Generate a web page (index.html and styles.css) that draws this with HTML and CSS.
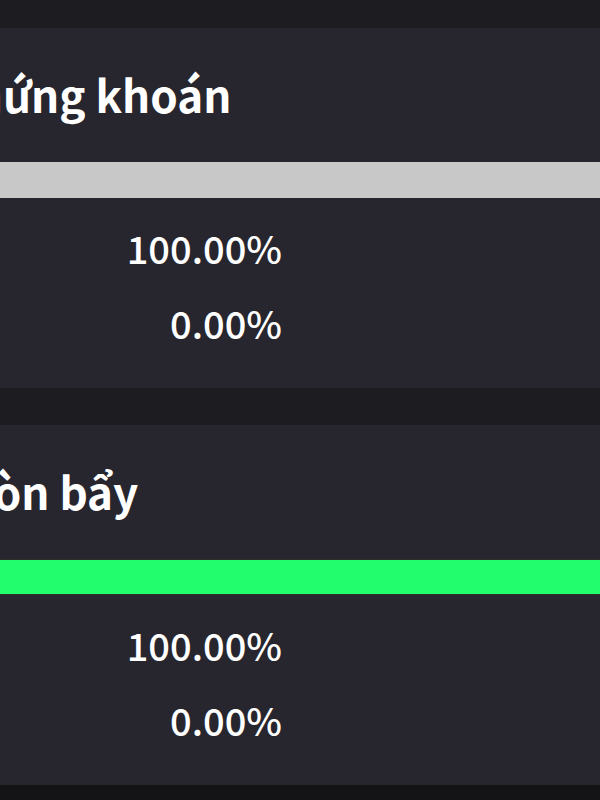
FILE: index.html
```html
<!DOCTYPE html>
<html lang="vi">
<head>
    <meta charset="UTF-8">
    <meta name="viewport" content="width=device-width, initial-scale=1.0">
    <title>Tỷ lệ</title>
    <link rel="stylesheet" href="styles.css">
</head>
<body>
    <div class="page">
        <!-- Chứng khoán -->
        <div class="card">
            <h2 class="card-title card-title-stock">Chứng khoán</h2>
            <div class="bar bar-gray"></div>
            <div class="rows">
                <div class="row"><span class="value">100.00%</span></div>
                <div class="row"><span class="value">0.00%</span></div>
            </div>
        </div>

        <!-- Đòn bẩy -->
        <div class="card">
            <h2 class="card-title card-title-leverage">Đòn bẩy</h2>
            <div class="bar bar-green"></div>
            <div class="rows">
                <div class="row"><span class="value">100.00%</span></div>
                <div class="row"><span class="value">0.00%</span></div>
            </div>
        </div>
    </div>
    <div class="bottom-nav"></div>
</body>
</html>
```

FILE: styles.css
```css
/* Màn hình tỷ lệ */
body {
    margin: 0;
    background-color: #1c1c21;
    font-family: "Noto Sans CJK SC", "Noto Sans", sans-serif;
    color: #fff;
    overflow: hidden;
}
.page {
    padding-top: 28px;
    display: flex;
    flex-direction: column;
    gap: 37px;
    overflow: hidden;
}
.card {
    background-color: #27262e;
    display: flex;
    flex-direction: column;
}
.card-title {
    margin: 0;
    font-size: 44px;
    font-weight: 700;
    line-height: 132px;
    height: 134px;
    white-space: nowrap;
}
.card-title-stock {
    margin-left: -54px;
}
.card-title-leverage {
    margin-left: -39px;
}
.bar {
    height: 36px;
}
.bar-gray {
    background-color: #c8c8c8;
}
.bar-green {
    background-color: #22fd6e;
    border-top: 1px solid #332c2c;
    border-bottom: 1px solid #332c2c;
    height: 34px;
}
.rows {
    padding: 12px 0 28px;
}
.row {
    width: 282px;
    height: 75px;
    display: flex;
    justify-content: flex-end;
    align-items: center;
}
.value {
    font-size: 38px;
    font-weight: 500;
}
.bottom-nav {
    height: 40px;
    background-color: #141417;
}
```
